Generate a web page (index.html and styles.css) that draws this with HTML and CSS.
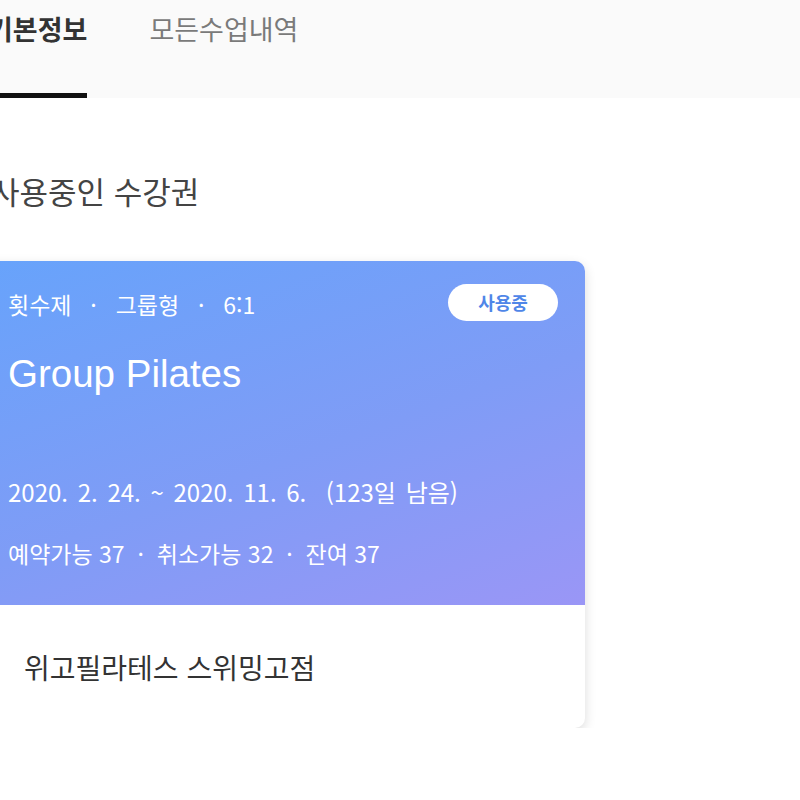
FILE: index.html
```html
<!DOCTYPE html>
<html lang="ko">
<head>
<meta charset="utf-8">
<link rel="stylesheet" href="styles.css">
</head>
<body>
<div class="tabbar">
  <div class="tabs">
    <div class="tab active">기본정보</div>
    <div class="tab">모든수업내역</div>
  </div>
</div>
<main class="content">
  <h2 class="section-title">사용중인 수강권</h2>
  <div class="card">
    <div class="card-top">
      <div class="card-head">
        <span class="meta">횟수제 &nbsp;·&nbsp; 그룹형 &nbsp;·&nbsp; 6:1</span>
        <span class="badge">사용중</span>
      </div>
      <div class="card-name">Group Pilates</div>
      <div class="card-period">2020. 2. 24. ~ 2020. 11. 6. &nbsp;(123일 남음)</div>
      <div class="card-counts">예약가능 37 &nbsp;·&nbsp; 취소가능 32 &nbsp;·&nbsp; 잔여 37</div>
    </div>
    <div class="card-bottom">위고필라테스 스위밍고점</div>
  </div>
</main>
</body>
</html>
```

FILE: styles.css
```css
* { box-sizing: border-box; }
html, body { margin: 0; padding: 0; background: #ffffff; overflow: hidden; }
body {
  font-family: "Noto Sans CJK KR", "Noto Sans", "Liberation Sans", sans-serif;
  color: #333;
}
.tabbar {
  background: #fafafa;
  height: 98px;
}
.tabs {
  display: flex;
  gap: 62px;
  margin-left: -12px;
  height: 100%;
}
.tab {
  height: 98px;
  padding-top: 9px;
  font-size: 27px;
  line-height: 40px;
  color: #7a7a7a;
  border-bottom: 5px solid transparent;
}
.tab.active {
  color: #333;
  font-weight: 700;
  border-bottom-color: #111;
}
.content {
  padding-top: 73px;
}
.section-title {
  margin: 0 0 0 -9px;
  font-size: 31px;
  font-weight: 400;
  line-height: 40px;
  color: #444;
}
.card {
  margin: 50px 0 0 -20px;
  width: 605px;
  border-radius: 10px;
  background: #fff;
  box-shadow: 0 4px 12px rgba(0,0,0,0.14);
  overflow: hidden;
}
.card-top {
  background: linear-gradient(160deg, #67a3fb 0%, #7f9cf6 55%, #9a96f6 100%);
  color: #fff;
  padding: 22px 27px 30px 28px;
  height: 344px;
}
.card-head {
  display: flex;
  align-items: center;
  justify-content: space-between;
  height: 38px;
}
.meta {
  font-size: 23px;
  line-height: 30px;
  padding-top: 3px;
  word-spacing: 3px;
}
.badge {
  width: 110px;
  height: 37px;
  border-radius: 19px;
  background: #fff;
  color: #4f86e8;
  font-weight: 700;
  font-size: 18px;
  display: flex;
  align-items: center;
  justify-content: center;
}
.card-name {
  margin-top: 31px;
  font-family: "Liberation Sans", Arial, sans-serif;
  font-size: 38.5px;
  line-height: 44px;
}
.card-period {
  margin-top: 80px;
  font-size: 24px;
  line-height: 32px;
  word-spacing: 3px;
}
.card-counts {
  margin-top: 30px;
  font-size: 23px;
  line-height: 30px;
}
.card-bottom {
  height: 123px;
  padding: 0 0 0 44px;
  display: flex;
  align-items: center;
  font-size: 28px;
  color: #333;
}
```
